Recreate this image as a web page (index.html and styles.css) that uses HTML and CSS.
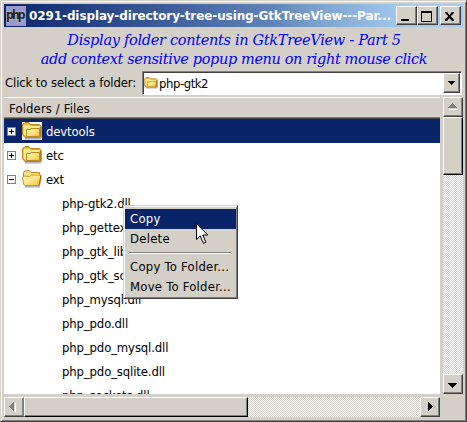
FILE: index.html
```html
<!DOCTYPE html>
<html lang="en">
<head>
<meta charset="utf-8">
<title>0291-display-directory-tree-using-GtkTreeView</title>
<link rel="stylesheet" href="styles.css">
</head>
<body>
<svg width="0" height="0" class="defs">
  <defs>
    <linearGradient id="gold" x1="0" y1="0" x2="1" y2="1"><stop offset="0" stop-color="#fffbb8"/><stop offset=".55" stop-color="#fbe37c"/><stop offset="1" stop-color="#eebd3c"/></linearGradient>
    <symbol id="closed" viewBox="0 0 20 18">
      <path d="M3 16.500h15l1.500-1.500V5" fill="none" stroke="#666" stroke-opacity=".5" stroke-width="1.800"/>
      <path d="M.5 2.500L2 1.500l1-1h4l1.500 2h9L19 4v10l-1.500 1.500H3L.5 13z" fill="#e0ac30" stroke="#b88724"/>
      <path d="M1.500 3l5.500-.5 2 1.500h9v2H9L8 7H4v7L1.500 12.500z" fill="#ffeb8c"/>
      <path d="M18.500 5v9.500l-1 1V5.500z" fill="#946207"/>
      <path d="M4.500 7.500h4l1-1h8v8h-13z" fill="url(#gold)" stroke="#bd8b25"/>
    </symbol>
    <symbol id="open" viewBox="0 0 20 18">
      <path d="M3 16.500h14l2-10" fill="none" stroke="#666" stroke-opacity=".5" stroke-width="1.800"/>
      <path d="M1.500 14V2.500L3 1l4-.5 2 2h8.500v11l-1.500 1.500H3z" fill="#fae384" stroke="#b88724"/>
      <path d="M.5 7l2-1 5 .5 2-1.500h9.500l-1.500 9-1 1.500H3L1.500 14z" fill="url(#gold)" stroke="#c7982f"/>
      <path d="M18.800 5.500l-1.300 8.500-1 1.500" fill="none" stroke="#946207"/>
    </symbol>
  </defs>
</svg>
<div class="window">
  <header class="titlebar">
    <div class="logo">php</div>
    <div class="title">0291-display-directory-tree-using-GtkTreeView---Par...</div>
    <div class="buttons">
      <button class="wb"><svg width="18" height="16"><path d="M4 11h8v2H4z"/></svg></button>
      <button class="wb"><svg width="18" height="16"><path d="M3 3h11v11H3zM4 5v8h9V5z" fill-rule="evenodd"/></svg></button>
      <button class="wb close"><svg width="18" height="16"><path d="M4 4h2l2.500 3L11 4h2v1L9.700 8.200 13 11.500V13h-2L8.500 10 6 13H4v-1.500l3.300-3.300L4 5z"/></svg></button>
    </div>
  </header>
  <div class="heading"><div class="h1">Display folder contents in GtkTreeView - Part 5</div><div class="h2">add context sensitive popup menu on right mouse click</div></div>
  <div class="chooser">
    <span class="label">Click to select a folder:</span>
    <div class="combo"><svg class="mini"><use href="#closed"/></svg><span class="value">php-gtk2</span><button class="drop"><svg width="15" height="18"><path d="M4 7h7v1h-1v1H9v1H8v1H7v-1H6V9H5V8H4z"/></svg></button></div>
  </div>
  <div class="browser">
    <div class="tree">
      <div class="thead"><span>Folders / Files</span></div>
      <div class="row sel"><i class="exp plus"></i><svg class="folder"><use href="#closed"/></svg><span>devtools</span></div>
      <div class="row"><i class="exp plus"></i><svg class="folder"><use href="#closed"/></svg><span>etc</span></div>
      <div class="row"><i class="exp"></i><svg class="folder"><use href="#open"/></svg><span>ext</span></div>
      <div class="row file"><span>php-gtk2.dll</span></div>
      <div class="row file"><span>php_gettext.dll</span></div>
      <div class="row file"><span>php_gtk_libglade2.dll</span></div>
      <div class="row file"><span>php_gtk_scintilla2.dll</span></div>
      <div class="row file"><span>php_mysql.dll</span></div>
      <div class="row file"><span>php_pdo.dll</span></div>
      <div class="row file"><span>php_pdo_mysql.dll</span></div>
      <div class="row file"><span>php_pdo_sqlite.dll</span></div>
      <div class="row file"><span>php_sockets.dll</span></div>
    </div>
    <div class="vscroll">
      <div class="sb up"><svg width="16" height="16"><path d="M5 11h9v1H5z" fill="#fff"/><path d="M4 10h9V9h-1V8h-1V7h-1V6H9V5H8v1H7v1H6v1H5v1H4z" fill="#808080"/></svg></div>
      <div class="vthumb"></div>
      <div class="trough"></div>
      <div class="sb down"><svg width="16" height="16"><path d="M4 8h9v1h-1v1h-1v1h-1v1H9v1H8v-1H7v-1H6v-1H5V9H4z"/></svg></div>
    </div>
    <div class="hscroll">
      <div class="sb left"><svg width="16" height="16"><path d="M10 5h1v9h-1z" fill="#fff"/><path d="M9 4v9H8v-1H7v-1H6v-1H5V9H4V8h1V7h1V6h1V5h1V4z" fill="#808080"/></svg></div>
      <div class="hthumb"></div>
      <div class="trough"></div>
      <div class="sb right"><svg width="16" height="16"><path d="M7 4h1v1h1v1h1v1h1v1h1v1h-1v1h-1v1H9v1H8v1H7z"/></svg></div>
    </div>
  </div>
</div>
<div class="menu">
  <div class="item active"><span>Copy</span></div>
  <div class="item"><span>Delete</span></div>
  <div class="sep"></div>
  <div class="item"><span>Copy To Folder...</span></div>
  <div class="item"><span>Move To Folder...</span></div>
</div>
<svg class="cursor" width="13" height="22" viewBox="0 0 13 22"><path d="M.5.700V16.500l3.700-3.600 3.300 7.500 2.500-1.100-3.200-7.300h5z" fill="#fff" stroke="#000"/></svg>
</body>
</html>
```
FILE: styles.css
```css
* { box-sizing: border-box; }
body { margin: 0; width: 467px; height: 422px; overflow: hidden; background: #d4d0c8; color: #000; font: 13px/16px "DejaVu Sans Condensed", "DejaVu Sans", sans-serif; font-stretch: condensed; }
.defs { position: absolute; }
span, .title, .h1, .h2 { white-space: nowrap; }
button { display: block; padding: 0; background: #d4d0c8; }
svg { display: block; }
.window { width: 467px; height: 422px; padding: 3px 2px 2px 3px; border: 1px solid; border-color: #d4d0c8 #404040 #404040 #d4d0c8; box-shadow: inset 1px 1px #fff, inset -1px -1px #808080; }
.titlebar { display: flex; align-items: center; width: 459px; height: 23px; padding: 0 2px; background: linear-gradient(90deg, #0a246a, #5f83ba 58%, #80a8d0 70%, #a6caf0 88%); }
.logo { width: 20px; height: 20px; background: #9999cc; color: #222; font: bold 12px/18px "DejaVu Sans Condensed", sans-serif; font-stretch: condensed; letter-spacing: -1.8px; text-shadow: 0 0 2px #ddd; overflow: hidden; }
.title { width: 365px; padding-left: 3px; color: #fff; font: bold 12px/16px "DejaVu Sans", sans-serif; font-stretch: normal; letter-spacing: -.1px; }
.buttons { display: flex; margin-left: auto; }
.wb, .drop, .sb { border: 1px solid; border-color: #fff #404040 #404040 #fff; box-shadow: inset -1px -1px #808080; background: #d4d0c8; }
.wb { width: 21px; height: 19px; }
.close { margin-left: 2px; }
.heading { height: 43px; padding-top: 4px; color: #00f; font: italic 14.5px/19px "DejaVu Serif", serif; font-stretch: normal; text-align: center; }
.h1 { letter-spacing: -.31px; }
.h2 { letter-spacing: -.38px; }
.chooser { display: flex; height: 27px; padding-top: 1px; }
.label { width: 138px; padding: 4px 0 0 1px; letter-spacing: -.12px; }
.combo { display: flex; width: 320px; height: 24px; border: 1px solid; border-color: #808080 #fff #fff #808080; box-shadow: inset 1px 1px #404040; background: #fff; padding: 1px; }
.mini { width: 14px; height: 12px; margin: 4px 0 0 0; }
.value { margin: 3px 0 0 1px; letter-spacing: -.45px; }
.drop { width: 17px; height: 20px; margin: 0 0 0 auto; }
.browser { display: grid; grid-template: 297px 20px / 436px 20px; gap: 3px; }
.tree { background: #fff; overflow: hidden; }
.thead { height: 22px; padding: 3px 5px 0; background: #d4d0c8; border-top: 1px solid #fff; border-bottom: 1px solid #404040; box-shadow: inset 0 -1px #808080; letter-spacing: .12px; }
.row { display: flex; align-items: center; height: 24px; padding-left: 3px; letter-spacing: -.14px; }
.row span { padding-top: 2px; }
.sel { background: #0a246a; color: #fff; }
.sel .folder { background: #fff; }
.exp { width: 9px; height: 9px; margin-right: 6px; border: 1px solid #808080; background: linear-gradient(#000, #000) 1px 3px / 5px 1px no-repeat, #fff; }
.plus { background: linear-gradient(#000, #000) 1px 3px / 5px 1px no-repeat, linear-gradient(#000, #000) 3px 1px / 1px 5px no-repeat, #fff; }
.folder { width: 20px; height: 18px; margin-right: 4px; }
.file { padding-left: 58px; }
.vscroll, .hscroll { display: flex; }
.vscroll { flex-direction: column; }
.sb { flex: none; width: 20px; height: 20px; }
.left { border-right-color: #808080; }
.vthumb, .hthumb { flex: none; border: 1px solid; border-color: #fff #000 #000 #fff; box-shadow: inset -1px -1px #808080; }
.vthumb { height: 58px; }
.hthumb { width: 224px; }
.trough { flex: 1; background: repeating-conic-gradient(#d4d0c8 0 25%, #fff 0 50%) 0 0 / 2px 2px; }
.menu { position: absolute; left: 123px; top: 205px; width: 115px; height: 94px; padding: 3px 1px 1px; background: #d4d0c8; border: 1px solid; border-color: #d4d0c8 #404040 #404040 #d4d0c8; box-shadow: inset 1px 1px #fff, inset -1px -1px #808080; }
.item { height: 20px; padding: 2px 5px; letter-spacing: .23px; }
.active { background: #0a246a; color: #fff; }
.sep { height: 2px; margin: 3px 5px 3px 4px; border-top: 1px solid #808080; background: #fff; }
.cursor { position: absolute; left: 196px; top: 223px; }
```
